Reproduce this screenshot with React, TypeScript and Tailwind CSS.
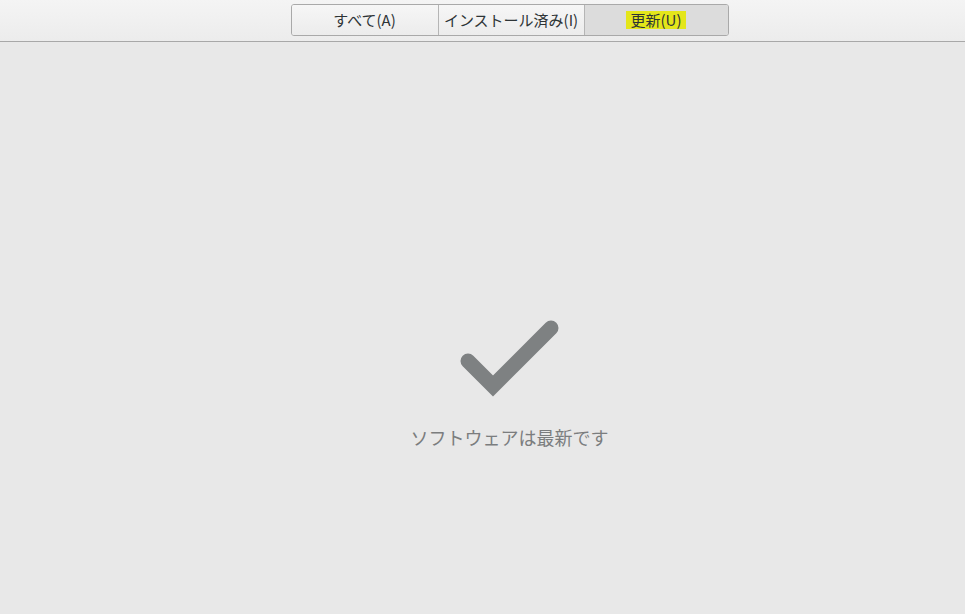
import React from "react";

export default function App() {
  const font = { fontFamily: '"Noto Sans CJK JP", "Noto Sans", sans-serif' };
  return (
    <div className="w-[965px] h-[614px] bg-[#e8e8e8] flex flex-col" style={font}>
      <div className="h-[42px] bg-gradient-to-b from-[#f4f4f4] to-[#ececec] border-b border-[#a8a8a8] flex justify-center items-start pt-[4px] pl-[54px]">
        <div className="flex h-[32px] border border-[#a9a9a9] rounded-[3px] overflow-hidden text-[15px] text-[#2e3436]">
          <div className="w-[146px] flex items-center justify-center bg-gradient-to-b from-[#f6f6f6] to-[#ececec]">すべて(A)</div>
          <div className="w-[146px] flex items-center justify-center border-l border-[#b5b5b5] bg-gradient-to-b from-[#f6f6f6] to-[#ececec]">インストール済み(I)</div>
          <div className="w-[144px] flex items-center justify-center border-l border-[#b5b5b5] bg-[#dcdcdc]">
            <span className="bg-[#e4e61a] px-[5px] leading-[18px]">更新(U)</span>
          </div>
        </div>
      </div>
      <div className="flex-1 flex flex-col items-center pl-[54px]">
        <svg width="120" height="95" viewBox="450 310 120 95" className="mt-[268px]">
          <path d="M468 361 L493 386 L551 328" fill="none" stroke="#7e8182" strokeWidth="15" strokeLinecap="round" strokeLinejoin="miter" />
        </svg>
        <div className="mt-[20px] text-[18px] text-[#7b7d7e] leading-[24px]">ソフトウェアは最新です</div>
      </div>
    </div>
  );
}
